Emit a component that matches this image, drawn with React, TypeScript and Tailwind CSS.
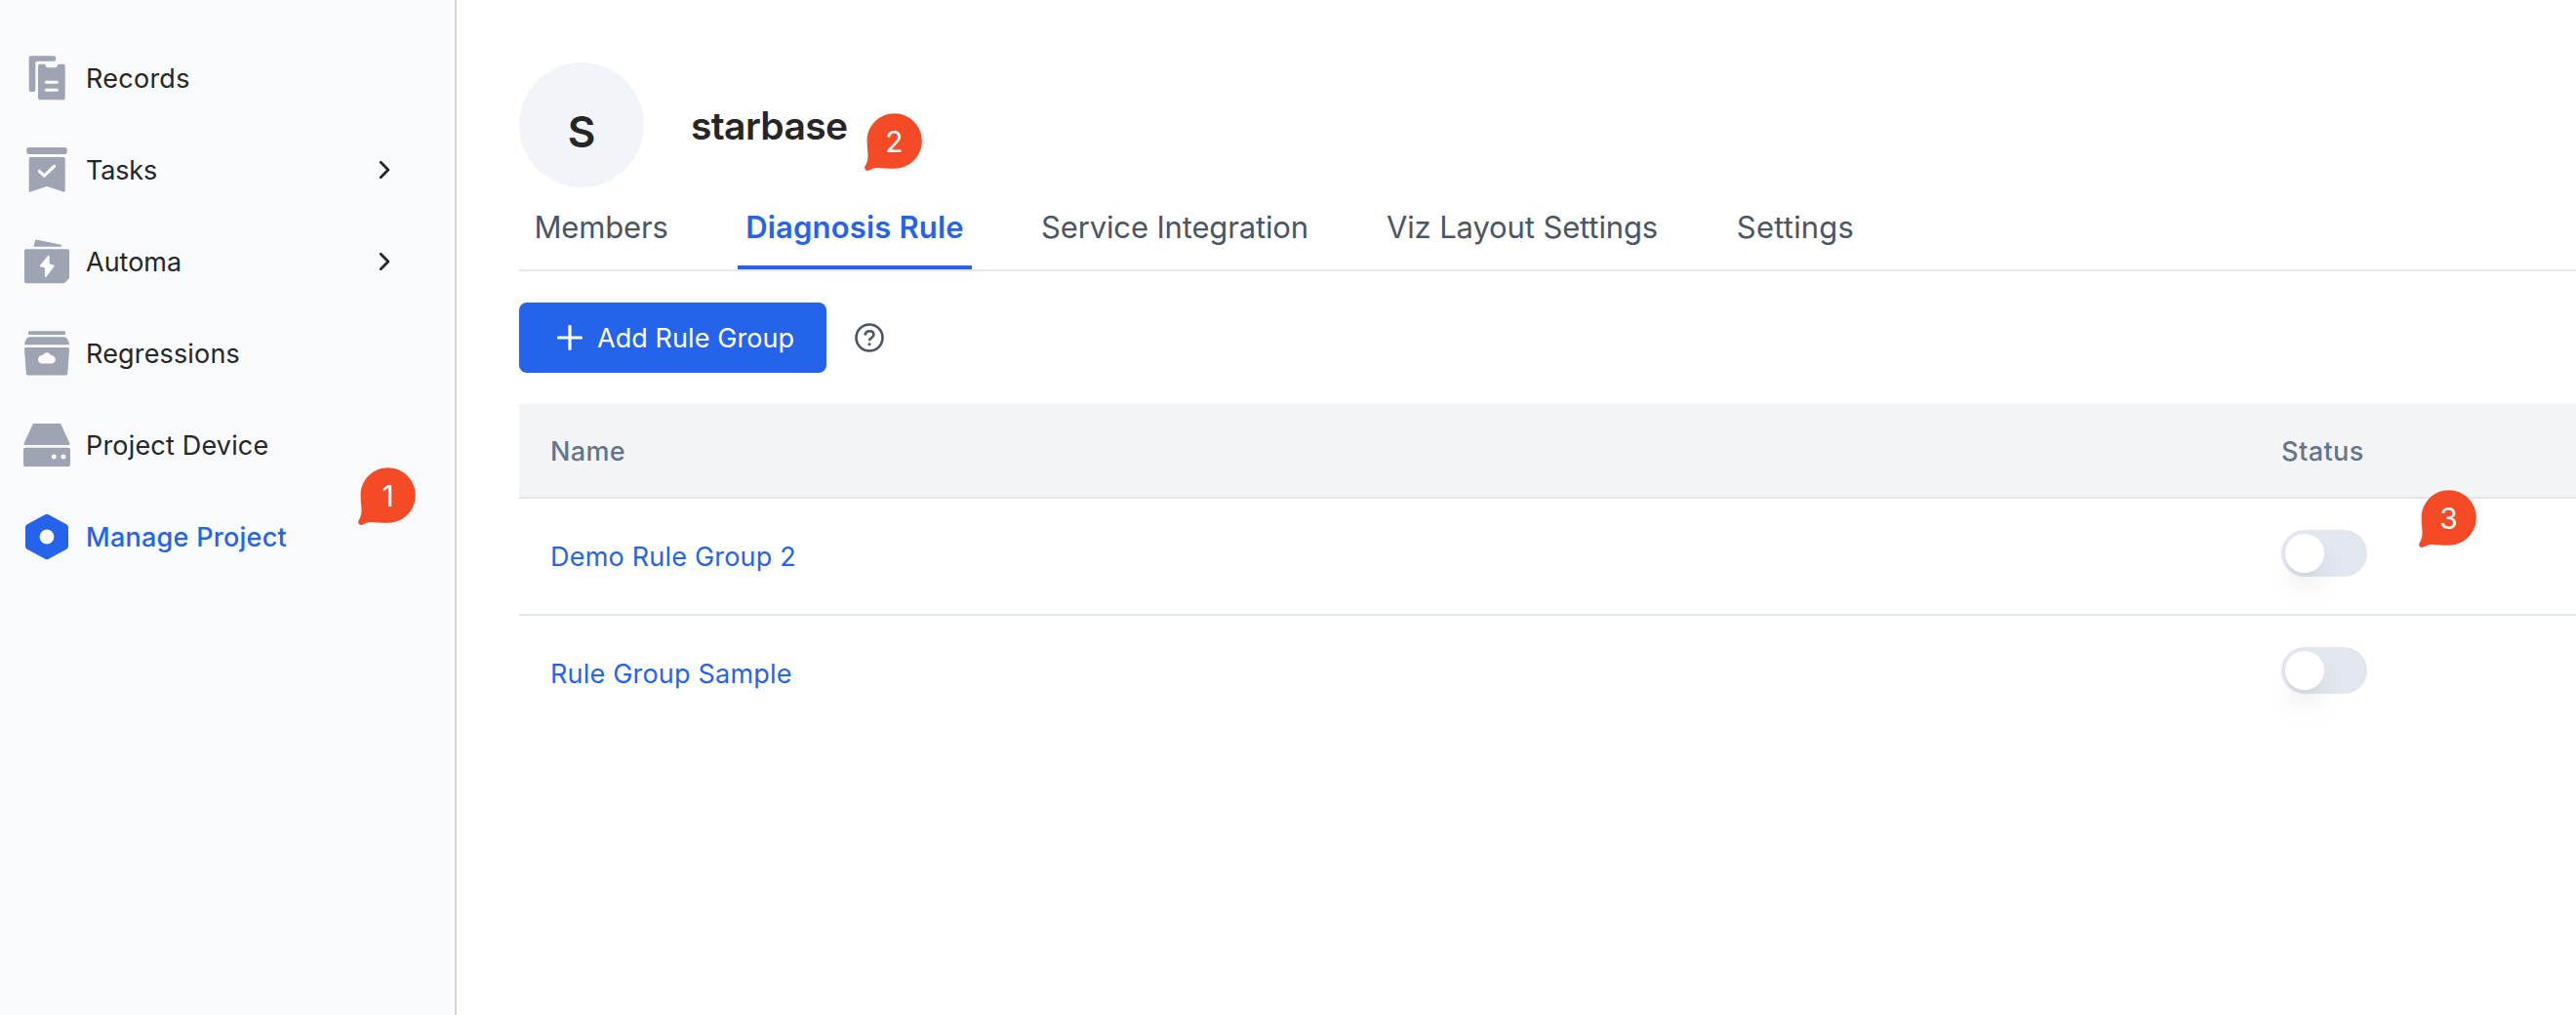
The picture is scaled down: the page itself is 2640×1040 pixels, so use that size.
import type { ReactNode } from "react";

function RecordsIcon() {
  return (
    <svg viewBox="0 0 48 48" className="size-12 shrink-0" fill="currentColor">
      <path d="M7.7 1.3H31.2a2.1 2.1 0 0 1 2.1 2.1v1.2a2.1 2.1 0 0 1-2.1 2.1H14.3a2 2 0 0 0-2 2V36a2 2 0 0 1-2 2H7.7a2 2 0 0 1-2-2V3.3a2 2 0 0 1 2-2Z" />
      <path d="M16.8 9.7h4.600c.9 0 1.200.4 1.400 1.200.4 1.600 1.300 2.400 2.600 2.400h7c1.300 0 2.200-.8 2.600-2.400.2-.8.5-1.200 1.400-1.200h4.500a1.800 1.800 0 0 1 1.800 1.800v33a1.800 1.800 0 0 1-1.800 1.800H16.800A1.800 1.800 0 0 1 15 44.500v-33a1.800 1.800 0 0 1 1.800-1.800Z" />
      <path d="M23.200 28.300h11.200M23.200 36.300h11.200" stroke="#f9fafc" strokeWidth="3" strokeLinecap="round" />
    </svg>
  );
}

function TasksIcon() {
  return (
    <svg viewBox="0 0 48 48" className="size-12 shrink-0" fill="currentColor">
      <rect x="3.300" y="1" width="41.400" height="7" rx="2.200" />
      <path d="M7.200 11h34a1.500 1.500 0 0 1 1.500 1.500v33a1.300 1.300 0 0 1-1.900 1.100L25 41.300a3 3 0 0 0-2 0L7.500 46.600a1.300 1.300 0 0 1-1.800-1.100v-33A1.500 1.500 0 0 1 7.200 11Z" />
      <path d="m16.300 25.300 5.100 4.900L31.500 20.300" fill="none" stroke="#f9fafc" strokeWidth="3.200" strokeLinecap="round" strokeLinejoin="round" />
    </svg>
  );
}

function AutomaIcon() {
  return (
    <svg viewBox="0 0 48 48" className="size-12 shrink-0" fill="currentColor">
      <path d="M12.900 1.500 38.500 6.800c.8.200.8 1.900 0 1.900H11.300c-.5 0-.7-.4-.6-.9l1.300-5.600c.1-.5.400-.8.900-.7Z" />
      <path d="M2.800 11.300h42.400A1.800 1.800 0 0 1 47 13.100v26.700c0 1-.4 1.800-1.100 2.500l-3 2.900c-.7.700-1.500 1.100-2.500 1.100H2.800A1.800 1.800 0 0 1 1 44.500V13.100a1.800 1.800 0 0 1 1.800-1.800Z" />
      <path d="M26.700 18.700v7.600l4.300 1.300c.7.300.9.8.5 1.400l-7.900 10.400c-.5.800-1.700.6-1.700-.5v-8.300l-4.400-1.300c-.8-.300-1-.8-.5-1.400l8-9.900c.6-.7 1.700-.3 1.700.7Z" fill="#f9fafc" />
    </svg>
  );
}

function RegressionsIcon() {
  return (
    <svg viewBox="0 0 48 48" className="size-12 shrink-0" fill="currentColor">
      <rect x="5" y="1.300" width="38" height="3.700" rx="1.300" />
      <path d="M6.200 7.300h35.600a3.500 3.500 0 0 1 3.100 1.900l1.400 2.900c.5 1 .6 1.600.6 3.200H1.300c0-1.600.1-2.200.6-3.200l1.300-2.900a3.400 3.400 0 0 1 3-1.900Z" />
      <path d="M2.500 18h43a1.600 1.600 0 0 1 1.600 1.700L45.200 45a1.800 1.800 0 0 1-1.800 1.600H4.700A1.800 1.800 0 0 1 2.900 45L1 19.700A1.600 1.600 0 0 1 2.500 18Z" />
      <path d="M19.500 34.600a4.300 4.300 0 0 1-.3-8.600c.7-.2 1-.4 1.300-.9a4.300 4.300 0 0 1 7 0c.3.500.7.700 1.300.9a4.300 4.300 0 0 1-.5 8.600Z" fill="#f9fafc" />
    </svg>
  );
}

function DeviceIcon() {
  return (
    <svg viewBox="0 0 48 48" className="size-12 shrink-0" fill="currentColor">
      <path d="M11.300 2h25.400c1 0 1.600.4 2 1.200l8.600 18.700c.5 1.100.2 2.100-.7 2.100H1.400c-.9 0-1.200-1-.7-2.100L9.300 3.200c.4-.8 1-1.200 2-1.200Z" />
      <rect x="0" y="26.700" width="48" height="19.300" rx="1.800" />
      <circle cx="31.300" cy="36" r="2.500" fill="#f9fafc" />
      <circle cx="40.900" cy="36" r="2.500" fill="#f9fafc" />
    </svg>
  );
}

function ManageIcon() {
  return (
    <svg viewBox="0 0 48 48" className="size-12 shrink-0" fill="currentColor">
      <path d="M22.300 1.200a3.500 3.500 0 0 1 3.400 0l18.500 10a3.500 3.500 0 0 1 1.800 3.100v19.400a3.500 3.500 0 0 1-1.800 3.100l-18.500 10a3.500 3.500 0 0 1-3.400 0L3.800 36.800A3.500 3.500 0 0 1 2 33.700V14.300a3.500 3.500 0 0 1 1.800-3.100Z" />
      <circle cx="24" cy="24" r="7.400" fill="#f9fafc" />
    </svg>
  );
}

function Chevron() {
  return (
    <svg viewBox="0 0 12 20" className="h-5 w-3" fill="none" stroke="currentColor" strokeWidth="2.700" strokeLinecap="round" strokeLinejoin="round">
      <path d="m2.200 2.200 7.700 7.800-7.700 7.800" />
    </svg>
  );
}

function Marker({ n, className }: { n: number; className: string }) {
  return (
    <div className={`absolute h-[60px] w-[60px] ${className}`}>
      <svg viewBox="0 0 60 60" className="absolute inset-0 size-full" fill="#f54a26">
        <path d="M30.500.3C46.300.3 58.800 12.800 58.800 28.500S46.300 56.700 30.500 56.700C24 56.700 18 55.900 13.500 55.900c-4 0-6.200 1.300-8.800 2.600C1.700 60-.9 57.200.5 54.500c1.800-3 3-6.500 3-10.800 0-4.700-.9-9.700-.9-15.200C2.600 12.800 14.900.3 30.500.3Z" />
      </svg>
      <span className="relative flex h-[57px] w-[61px] items-center justify-center text-[30px] font-normal text-white">{n}</span>
    </div>
  );
}

function NavItem({ icon, label, arrow, active, className }: { icon: ReactNode; label: string; arrow?: boolean; active?: boolean; className: string }) {
  return (
    <li className={active ? "relative flex h-[94px] items-center pl-6 pr-[66px] font-medium text-[#2563eb]" : "relative flex h-[94px] items-center pl-6 pr-[66px] text-[#262626]"}>
      <span className={active ? "text-[#2563eb]" : "text-[#9fa4b3]"}>{icon}</span>
      <span className={`ml-4 flex-1 pt-0.5 ${className}`}>{label}</span>
      {arrow && <Chevron />}
      {active && <Marker n={1} className="-top-6 left-[367px]" />}
    </li>
  );
}

const tabs = [
  { label: "Members", className: "w-[152px] tracking-[-0.16px]" },
  { label: "Diagnosis Rule", className: "w-[240px] tracking-[0.17px]", active: true },
  { label: "Service Integration", className: "w-[288px] tracking-[-0.15px]" },
  { label: "Viz Layout Settings", className: "w-[296px] tracking-[-0.12px]" },
  { label: "Settings", className: "w-[136px] tracking-[0.2px]" },
];

function Row({ name, className, children }: { name: string; className: string; children?: ReactNode }) {
  return (
    <div className={`relative flex items-center pl-8 ${className}`}>
      <a className="w-[1774px] pt-0.5 tracking-[0.2px] text-[#2563eb]">{name}</a>
      <button className="-mt-1.5 flex h-12 w-[88px] items-center rounded-full bg-[#e2e6ef] px-1">
        <span className="size-10 rounded-full bg-white shadow-[0_20px_30px_-6px_rgba(0,0,0,0.1),0_8px_12px_-8px_rgba(0,0,0,0.1)]" />
      </button>
      {children}
    </div>
  );
}

export default function App() {
  return (
    <div className="flex h-[1040px] w-[2640px] overflow-hidden bg-white font-['Inter',sans-serif] text-[27px] leading-10">
      <aside className="w-[468px] shrink-0 border-r-2 border-[#d3d5dd] bg-[#f9fafc] pt-[33px]">
        <ul>
          <NavItem icon={<RecordsIcon />} label="Records" className="tracking-[0.26px]" />
          <NavItem icon={<TasksIcon />} label="Tasks" arrow className="tracking-[-0.17px]" />
          <NavItem icon={<AutomaIcon />} label="Automa" arrow className="tracking-normal" />
          <NavItem icon={<RegressionsIcon />} label="Regressions" className="tracking-[0.16px]" />
          <NavItem icon={<DeviceIcon />} label="Project Device" className="tracking-[0.18px]" />
          <NavItem icon={<ManageIcon />} label="Manage Project" active className="tracking-[0.26px]" />
        </ul>
      </aside>
      <main className="min-w-0 flex-1 pl-16 pt-16">
        <header className="relative flex h-32 items-center text-[#262626]">
          <div className="flex size-32 items-center justify-center rounded-full bg-[#f1f5fa] pt-3.5 text-[44px] font-semibold">S</div>
          <h1 className="ml-12 mt-0.5 text-[39px] font-semibold tracking-[-0.63px]">starbase</h1>
          <Marker n={2} className="left-[354px] top-[52px]" />
        </header>
        <nav className="flex gap-16 border-b-2 border-[#e2e6ef] pl-2 text-[31px]">
          {tabs.map((t) => (
            <a
              key={t.label}
              className={`flex h-[84px] items-center justify-center whitespace-nowrap border-b-4 pt-0.5 ${t.className} ${
                t.active ? "border-[#2563eb] font-semibold text-[#2563eb]" : "border-transparent text-[#4b5563]"
              }`}
            >
              {t.label}
            </a>
          ))}
        </nav>
        <div className="mt-8 flex items-center">
          <button className="flex h-[72px] w-[315px] items-center rounded-lg bg-[#2563eb] pl-[39px] text-white">
            <svg viewBox="0 0 26 26" className="size-[26px]" stroke="currentColor" strokeWidth="3.200" strokeLinecap="round">
              <path d="M13 1.500v23M1.500 13h23" />
            </svg>
            <span className="ml-[15px] pt-0.5 tracking-[0.08px]">Add Rule Group</span>
          </button>
          <svg viewBox="0 0 30 30" className="ml-[29px] size-[30px] text-[#4b5563]" fill="none" stroke="currentColor" strokeWidth="2.600" strokeLinecap="round" strokeLinejoin="round">
            <circle cx="15" cy="15" r="13.500" />
            <path d="M10.700 11.500c.7-2.100 2.400-3.200 4.500-3.200 2.500 0 4.200 1.500 4.200 3.600 0 2.900-3.400 3.300-4.200 5.200" />
            <circle cx="15" cy="21.700" r="1.500" fill="currentColor" stroke="none" />
          </svg>
        </div>
        <section className="mt-8">
          <div className="flex h-[97px] items-center border-b-2 border-[#e2e6ef] bg-[#f2f4f6] pl-8 pt-0.5 font-medium text-[#64748b]">
            <span className="w-[1774px] tracking-[0.35px]">Name</span>
            <span className="tracking-[0.45px]">Status</span>
          </div>
          <Row name="Demo Rule Group 2" className="h-[120px] border-b-2 border-[#e2e6ef]">
            <Marker n={3} className="-top-[9px] left-[1947px]" />
          </Row>
          <Row name="Rule Group Sample" className="h-[118px]" />
        </section>
      </main>
    </div>
  );
}
